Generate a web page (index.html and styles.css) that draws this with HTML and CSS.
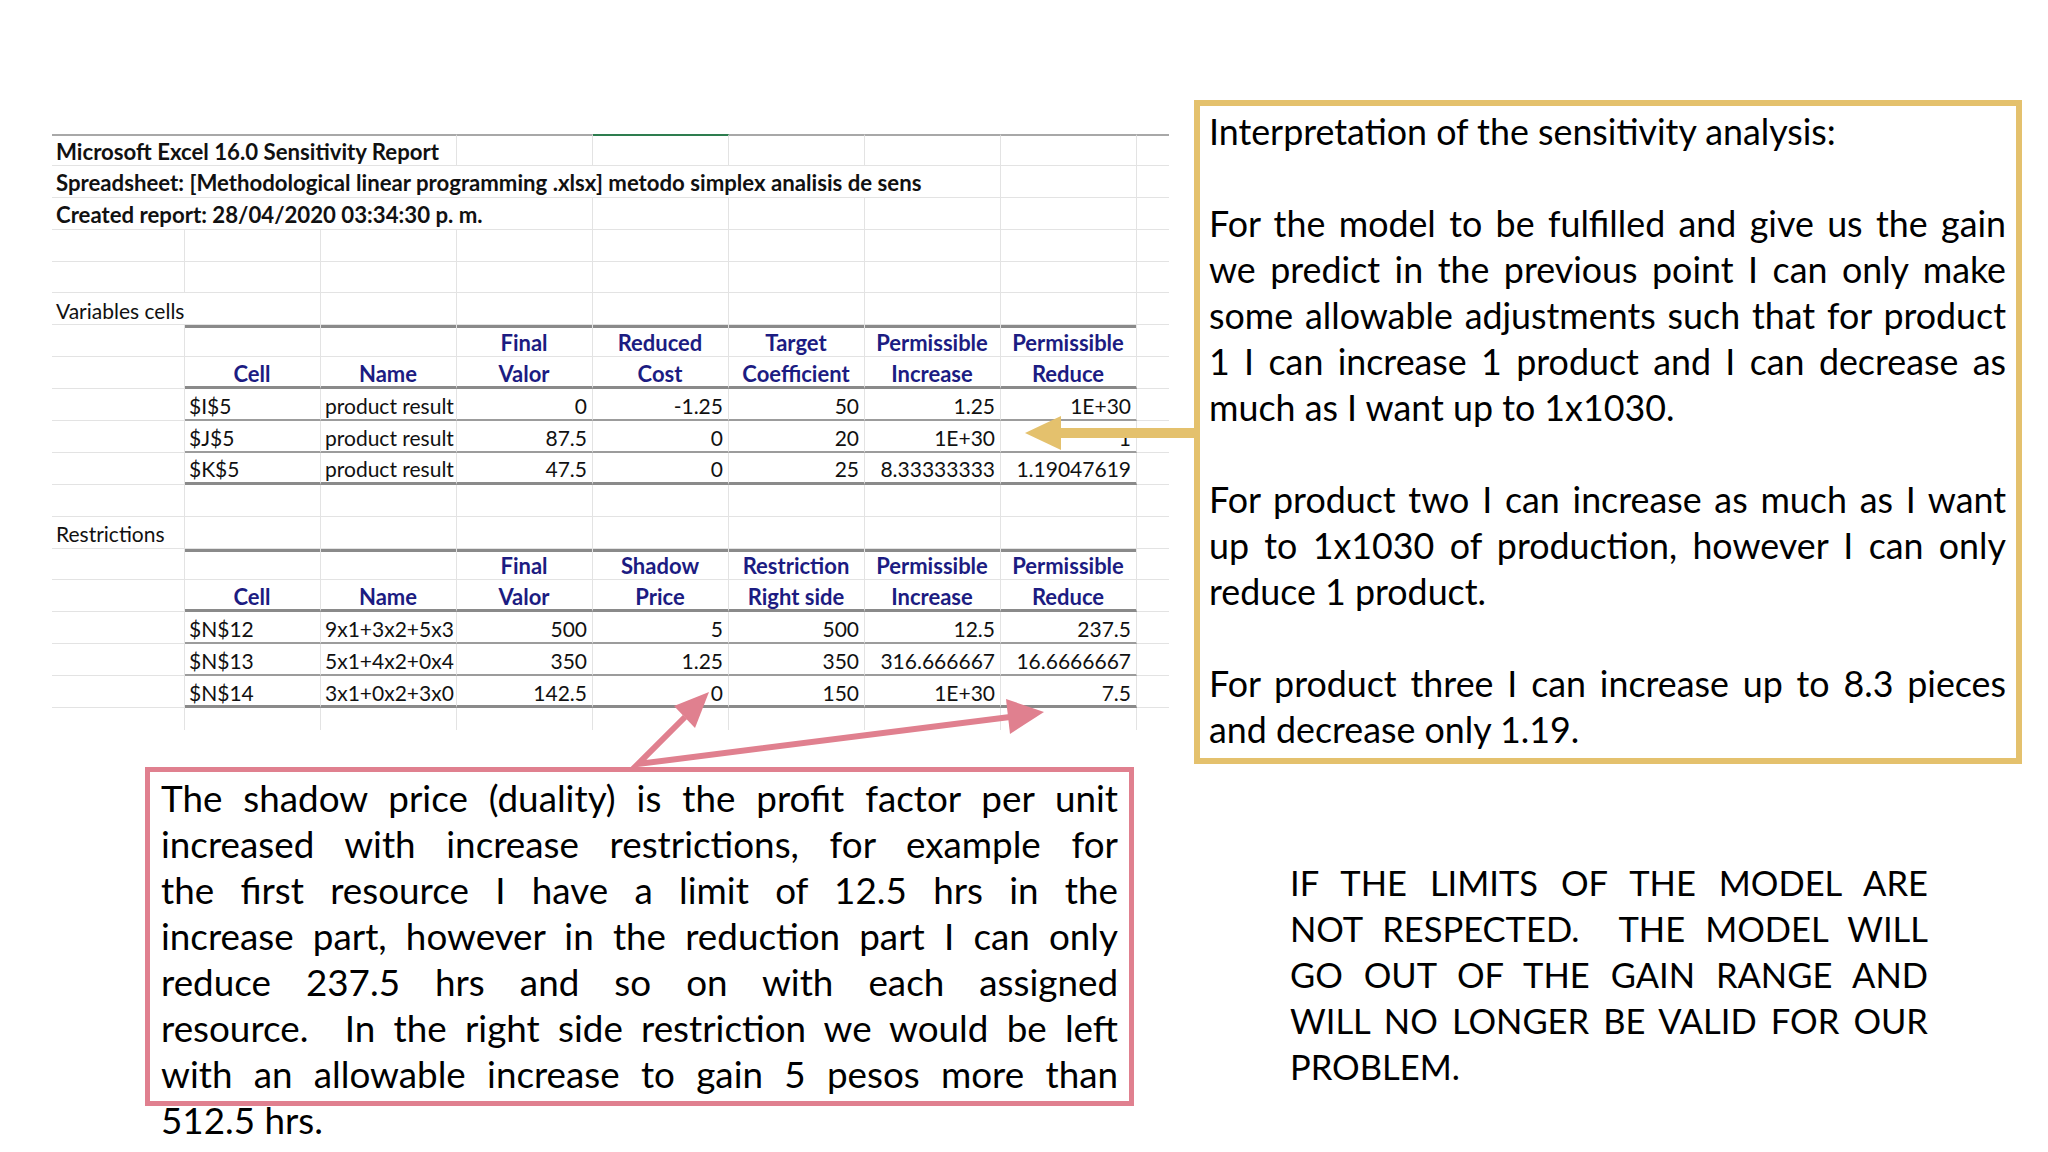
FILE: index.html
```html
<!DOCTYPE html>
<html lang="en">
<head>
<meta charset="utf-8">
<title>Sensitivity analysis</title>
<link rel="stylesheet" href="styles.css">
</head>
<body>
<div class="slide">
  <div class="left">
    <div class="sheet">
      <div class="row">
        <div class="c top s3 b">Microsoft Excel 16.0 Sensitivity Report</div>
        <div class="c top"></div><div class="c top sel"></div><div class="c top"></div><div class="c top"></div><div class="c top"></div><div class="c top last"></div>
      </div>
      <div class="row">
        <div class="c s7 b">Spreadsheet: [Methodological linear programming .xlsx] metodo simplex analisis de sens</div>
        <div class="c"></div><div class="c last"></div>
      </div>
      <div class="row">
        <div class="c s4 b">Created report: 28/04/2020 03:34:30 p. m.</div>
        <div class="c"></div><div class="c"></div><div class="c"></div><div class="c"></div><div class="c last"></div>
      </div>
      <div class="row">
        <div class="c"></div><div class="c"></div><div class="c"></div><div class="c"></div><div class="c"></div><div class="c"></div><div class="c"></div><div class="c"></div><div class="c last"></div>
      </div>
      <div class="row">
        <div class="c"></div><div class="c"></div><div class="c"></div><div class="c"></div><div class="c"></div><div class="c"></div><div class="c"></div><div class="c"></div><div class="c last"></div>
      </div>
      <div class="row">
        <div class="c s2">Variables cells</div>
        <div class="c"></div><div class="c"></div><div class="c"></div><div class="c"></div><div class="c"></div><div class="c"></div><div class="c last"></div>
      </div>
      <div class="row">
        <div class="c"></div>
        <div class="c h tt"></div><div class="c h tt"></div><div class="c h tt">Final</div><div class="c h tt">Reduced</div><div class="c h tt">Target</div><div class="c h tt">Permissible</div><div class="c h tt">Permissible</div>
        <div class="c last"></div>
      </div>
      <div class="row">
        <div class="c"></div>
        <div class="c h tb">Cell</div><div class="c h tb">Name</div><div class="c h tb">Valor</div><div class="c h tb">Cost</div><div class="c h tb">Coefficient</div><div class="c h tb">Increase</div><div class="c h tb">Reduce</div>
        <div class="c last"></div>
      </div>
      <div class="row">
        <div class="c"></div>
        <div class="c tm">$I$5</div><div class="c tm">product result</div><div class="c n tm">0</div><div class="c n tm">-1.25</div><div class="c n tm">50</div><div class="c n tm">1.25</div><div class="c n tm">1E+30</div>
        <div class="c last"></div>
      </div>
      <div class="row">
        <div class="c"></div>
        <div class="c tm">$J$5</div><div class="c tm">product result</div><div class="c n tm">87.5</div><div class="c n tm">0</div><div class="c n tm">20</div><div class="c n tm">1E+30</div><div class="c n tm">1</div>
        <div class="c last"></div>
      </div>
      <div class="row">
        <div class="c"></div>
        <div class="c tb">$K$5</div><div class="c tb">product result</div><div class="c n tb">47.5</div><div class="c n tb">0</div><div class="c n tb">25</div><div class="c n tb">8.33333333</div><div class="c n tb">1.19047619</div>
        <div class="c last"></div>
      </div>
      <div class="row">
        <div class="c"></div><div class="c"></div><div class="c"></div><div class="c"></div><div class="c"></div><div class="c"></div><div class="c"></div><div class="c"></div><div class="c last"></div>
      </div>
      <div class="row">
        <div class="c">Restrictions</div>
        <div class="c"></div><div class="c"></div><div class="c"></div><div class="c"></div><div class="c"></div><div class="c"></div><div class="c"></div><div class="c last"></div>
      </div>
      <div class="row">
        <div class="c"></div>
        <div class="c h tt"></div><div class="c h tt"></div><div class="c h tt">Final</div><div class="c h tt">Shadow</div><div class="c h tt">Restriction</div><div class="c h tt">Permissible</div><div class="c h tt">Permissible</div>
        <div class="c last"></div>
      </div>
      <div class="row">
        <div class="c"></div>
        <div class="c h tb">Cell</div><div class="c h tb">Name</div><div class="c h tb">Valor</div><div class="c h tb">Price</div><div class="c h tb">Right side</div><div class="c h tb">Increase</div><div class="c h tb">Reduce</div>
        <div class="c last"></div>
      </div>
      <div class="row">
        <div class="c"></div>
        <div class="c tm">$N$12</div><div class="c tm">9x1+3x2+5x3</div><div class="c n tm">500</div><div class="c n tm">5</div><div class="c n tm">500</div><div class="c n tm">12.5</div><div class="c n tm">237.5</div>
        <div class="c last"></div>
      </div>
      <div class="row">
        <div class="c"></div>
        <div class="c tm">$N$13</div><div class="c tm">5x1+4x2+0x4</div><div class="c n tm">350</div><div class="c n tm">1.25</div><div class="c n tm">350</div><div class="c n tm">316.666667</div><div class="c n tm">16.6666667</div>
        <div class="c last"></div>
      </div>
      <div class="row">
        <div class="c"></div>
        <div class="c tb">$N$14</div><div class="c tb">3x1+0x2+3x0</div><div class="c n tb">142.5</div><div class="c n tb">0</div><div class="c n tb">150</div><div class="c n tb">1E+30</div><div class="c n tb">7.5</div>
        <div class="c last"></div>
      </div>
      <div class="row">
        <div class="c"></div><div class="c"></div><div class="c"></div><div class="c"></div><div class="c"></div><div class="c"></div><div class="c"></div><div class="c"></div><div class="c last"></div>
      </div>
    </div>

    <div class="pink-box">
      <span class="jl">The shadow price (duality) is the profit factor per unit</span>
      <span class="jl">increased with increase restrictions, for example for</span>
      <span class="jl">the first resource I have a limit of 12.5 hrs in the</span>
      <span class="jl">increase part, however in the reduction part I can only</span>
      <span class="jl">reduce 237.5 hrs and so on with each assigned</span>
      <span class="jl">resource.&nbsp; In the right side restriction we would be left</span>
      <span class="jl">with an allowable increase to gain 5 pesos more than</span>
      <span class="ll">512.5 hrs.</span>
    </div>
  </div>

  <div class="right">
    <div class="gold-box">
      <p class="para"><span class="ll">Interpretation of the sensitivity analysis:</span></p>
      <p class="para">
        <span class="jl">For the model to be fulfilled and give us the gain</span>
        <span class="jl">we predict in the previous point I can only make</span>
        <span class="jl">some allowable adjustments such that for product</span>
        <span class="jl">1 I can increase 1 product and I can decrease as</span>
        <span class="ll">much as I want up to 1x1030.</span>
      </p>
      <p class="para">
        <span class="jl">For product two I can increase as much as I want</span>
        <span class="jl">up to 1x1030 of production, however I can only</span>
        <span class="ll">reduce 1 product.</span>
      </p>
      <p class="para">
        <span class="jl">For product three I can increase up to 8.3 pieces</span>
        <span class="ll">and decrease only 1.19.</span>
      </p>
    </div>
    <div class="caps">
      <span class="jl">IF THE LIMITS OF THE MODEL ARE</span>
      <span class="jl">NOT RESPECTED.&nbsp; THE MODEL WILL</span>
      <span class="jl">GO OUT OF THE GAIN RANGE AND</span>
      <span class="jl">WILL NO LONGER BE VALID FOR OUR</span>
      <span class="ll">PROBLEM.</span>
    </div>
  </div>

  <svg class="arrows" width="2048" height="1152" viewBox="0 0 2048 1152" aria-hidden="true">
    <line x1="1197" y1="433" x2="1056" y2="433" class="gold-line"/>
    <polygon points="1025,433 1061,416 1061,450" class="gold-fill"/>
    <polyline points="685,717 638,764 1010,717" class="pink-line"/>
    <polygon points="709,692 674,706 695,728" class="pink-fill"/>
    <polygon points="1044,712 1006,699 1010,734" class="pink-fill"/>
  </svg>
</div>
</body>
</html>
```

FILE: styles.css
```css
html, body {
  margin: 0;
  padding: 0;
  background: #ffffff;
}

.slide {
  position: relative;
  width: 2048px;
  height: 1152px;
  overflow: hidden;
  background: #ffffff;
  display: flex;
  color: #000;
}

/* ---------- left column: spreadsheet + pink note ---------- */
.left {
  width: 1194px;
  box-sizing: border-box;
  padding-left: 52px;
  padding-top: 134px;
  display: flex;
  flex-direction: column;
  flex: none;
}

.sheet {
  width: 1117px;
  height: 596px;
  overflow: hidden;
  font-family: Lato, "Open Sans", sans-serif;
  font-size: 21px;
  color: #111;
}

.row {
  display: grid;
  grid-template-columns: 133px repeat(7, 136px) 32px;
  height: 31.9px;
}

.c {
  box-sizing: border-box;
  border-right: 1px solid #e3e3e3;
  border-bottom: 1px solid #e3e3e3;
  padding: 3px 5px 0 4px;
  white-space: nowrap;
  overflow: hidden;
  display: flex;
  align-items: center;
  min-width: 0;
}

.c.last { border-right: none; }
.c.top { border-top: 2px solid #a8a8a8; }
.c.top.sel { border-top-color: #2e7d4f; }

.s2 { grid-column: span 2; }
.s3 { grid-column: span 3; }
.s4 { grid-column: span 4; }
.s7 { grid-column: span 7; }

.b {
  font-weight: 700;
  font-size: 22.2px;
}

.h {
  font-weight: 700;
  font-size: 22px;
  color: #1c1c82;
  justify-content: center;
}

.n { justify-content: flex-end; }

.tt { box-shadow: inset 0 3px 0 #8a8a8a; }
.tb { border-bottom: 3px solid #8a8a8a; }
.tm { border-bottom: 2px solid #9c9c9c; }

.pink-box {
  margin-top: 37px;
  margin-left: 93px;
  width: 989px;
  height: 339px;
  box-sizing: border-box;
  border: 5px solid #e0808f;
  padding: 3px 11px 0 11px;
  font-family: Lato, "Open Sans", sans-serif;
  font-size: 36.8px;
  line-height: 46px;
  color: #000;
}

/* ---------- right column: gold note + caps text ---------- */
.right {
  width: 828px;
  padding-top: 100px;
  display: flex;
  flex-direction: column;
  flex: none;
}

.gold-box {
  width: 828px;
  height: 664px;
  box-sizing: border-box;
  border: 6px solid #e4c16d;
  padding: 3px 10px 0 9px;
  font-family: Lato, "Open Sans", sans-serif;
  font-size: 35.8px;
  line-height: 46px;
  color: #000;
}

.para { margin: 0 0 46px 0; }
.para:last-child { margin-bottom: 0; }

.caps {
  margin-top: 96px;
  margin-left: 96px;
  width: 638px;
  font-family: Lato, "Open Sans", sans-serif;
  font-size: 34.5px;
  line-height: 46px;
  color: #000;
}

/* justified single lines */
.jl {
  display: block;
  white-space: nowrap;
  text-align: justify;
  text-align-last: justify;
}

.ll {
  display: block;
  white-space: nowrap;
  text-align: left;
}

/* ---------- arrows overlay ---------- */
.arrows {
  position: absolute;
  left: 0;
  top: 0;
  pointer-events: none;
}

.gold-line { stroke: #e4c16d; stroke-width: 10; fill: none; }
.gold-fill { fill: #e4c16d; }
.pink-line { stroke: #e0808f; stroke-width: 6; fill: none; stroke-linejoin: miter; }
.pink-fill { fill: #e0808f; }
```
